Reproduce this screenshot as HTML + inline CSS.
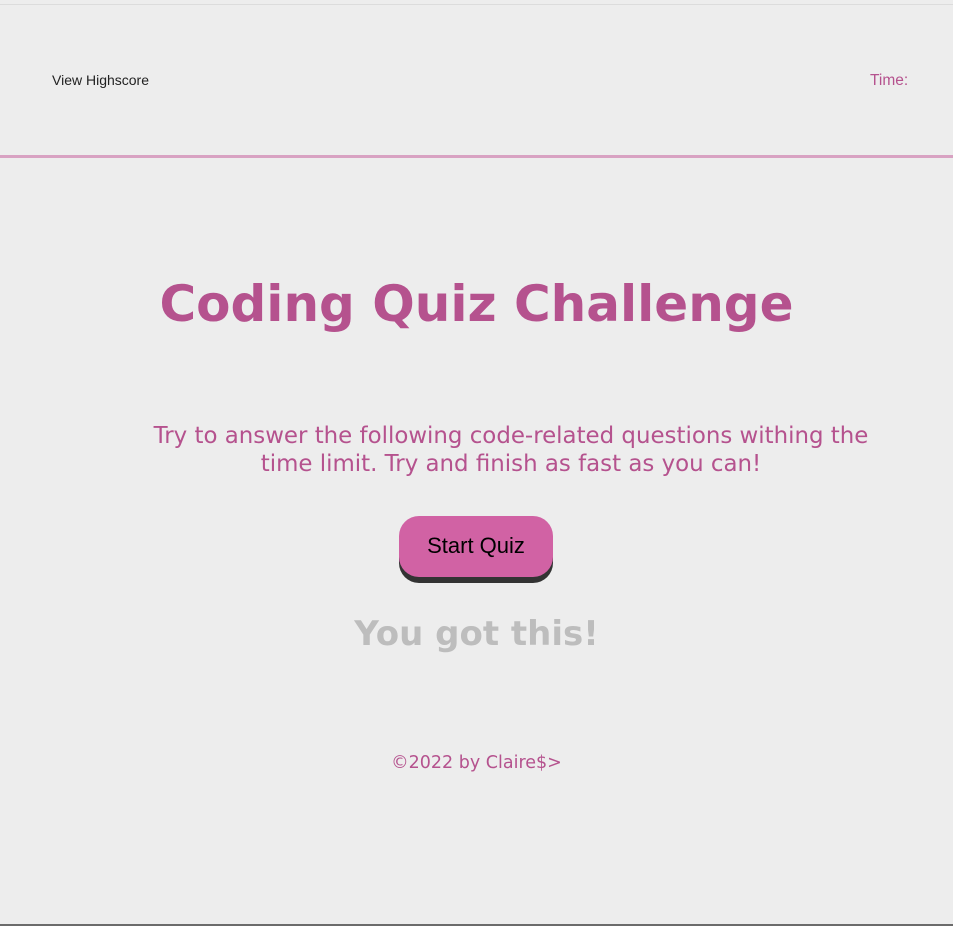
<!DOCTYPE html>
<html><head><style>
html,body{margin:0;padding:0;}
body{width:953px;height:926px;background:#ededed;position:relative;overflow:hidden;font-family:"DejaVu Sans",sans-serif;}
.topline{position:absolute;left:0;top:4px;width:953px;height:1px;background:#dcdcdc;}
.botline{position:absolute;left:0;top:924px;width:953px;height:2px;background:#6b6b6b;}
.hs{position:absolute;left:52px;top:72px;font:14px "Liberation Sans",sans-serif;color:#222;}
.time{position:absolute;left:870px;top:72px;font:15.5px "Liberation Sans",sans-serif;color:#b5528e;}
.pink{position:absolute;left:0;top:155px;width:953px;height:3px;background:#d8a2c2;}
h1{position:absolute;left:0;width:953px;top:274px;margin:0;text-align:center;font:bold 50px "DejaVu Sans",sans-serif;color:#b5528e;line-height:60px;}
p.desc{position:absolute;left:140px;width:742px;top:422px;margin:0;text-align:center;font-size:22.9px;line-height:28px;color:#b5528e;}
.btn{position:absolute;left:399px;top:516px;width:154px;height:61px;background:#d162a4;border-radius:20px;box-shadow:0 6px 0 #333;font:22px "Liberation Sans",sans-serif;color:#000;text-align:center;line-height:60px;}
.got{position:absolute;left:0;width:953px;top:614px;text-align:center;font:bold 34px "DejaVu Sans",sans-serif;color:#bdbdbd;}
.foot{position:absolute;left:0;width:953px;top:753px;text-align:center;font-size:17.5px;color:#b5528e;}
</style></head><body>
<div class="topline"></div>
<div class="hs">View Highscore</div>
<div class="time">Time:</div>
<div class="pink"></div>
<h1>Coding Quiz Challenge</h1>
<p class="desc">Try to answer the following code-related questions withing the time limit. Try and finish as fast as you can!</p>
<div class="btn">Start Quiz</div>
<div class="got">You got this!</div>
<div class="foot">©2022 by Claire$&gt;</div>
<div class="botline"></div>
</body></html>
